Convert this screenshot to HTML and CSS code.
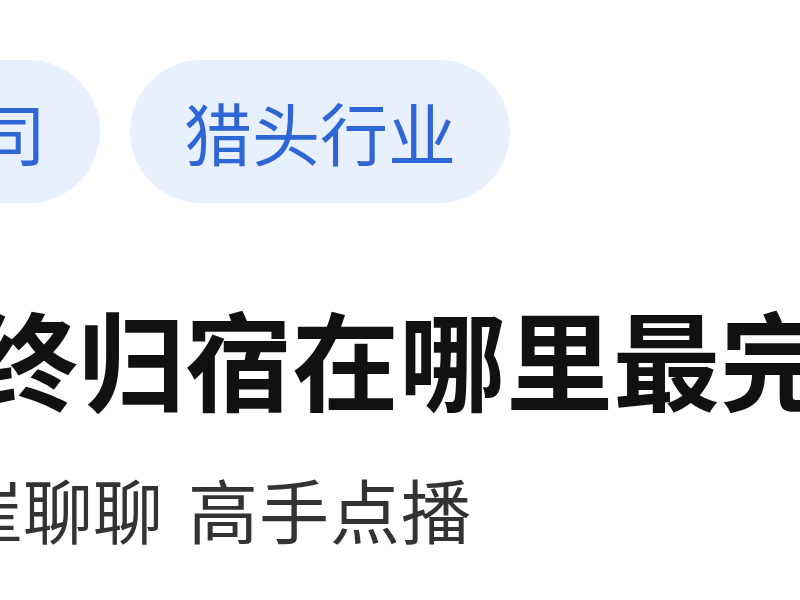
FILE: index.html
```html
<!DOCTYPE html>
<html lang="zh-CN">
<head>
<meta charset="utf-8">
<title>猎头行业</title>
<link rel="stylesheet" href="styles.css">
</head>
<body>
<div class="card">
  <div class="tags">
    <span class="tag">公司</span>
    <span class="tag">猎头行业</span>
  </div>
  <h1 class="title">最终归宿在哪里最完美</h1>
  <p class="meta"><span class="author">老崔聊聊</span><span class="source">高手点播</span></p>
</div>
</body>
</html>
```
FILE: styles.css
```css
html, body {
  margin: 0;
  padding: 0;
  background: #ffffff;
  width: 800px;
  height: 600px;
  overflow: hidden;
}
.card {
  font-family: "Noto Sans CJK SC", "Noto Sans", sans-serif;
  white-space: nowrap;
  padding-top: 60px;
}
.tags {
  display: flex;
  gap: 30px;
  margin-left: -144px;
}
.tag {
  display: inline-flex;
  align-items: center;
  height: 143px;
  padding: 0 54px;
  border-radius: 72px;
  background: #e8effd;
  color: #2f66d6;
  font-size: 68px;
  line-height: 1;
}
.title {
  margin: 100px 0 0 -136px;
  font-size: 107px;
  line-height: 1;
  font-weight: 700;
  color: #111111;
}
.meta {
  margin: 64px 0 0 -117px;
  font-size: 70px;
  line-height: 1;
  color: #333333;
  display: flex;
  gap: 25px;
}
.source {
  letter-spacing: 1px;
}
```
